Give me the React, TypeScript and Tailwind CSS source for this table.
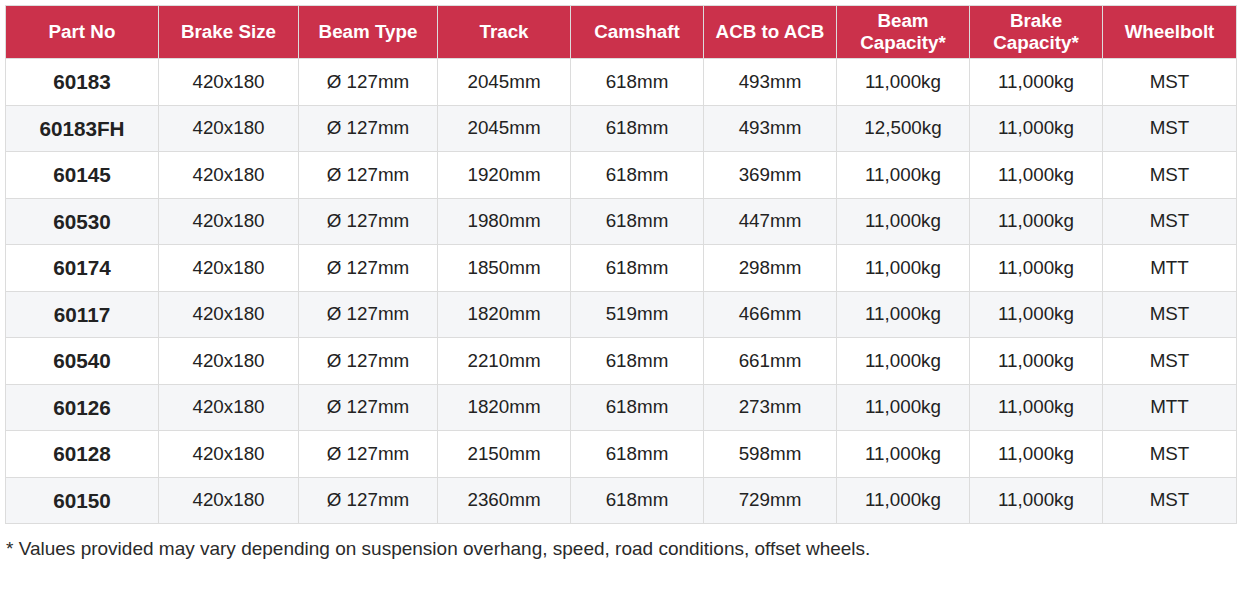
import React from "react";

const widths = ["w-[153px]", "w-[140px]", "w-[139px]", "w-[133px]", "w-[133px]", "w-[133px]", "w-[133px]", "w-[133px]", "w-[134px]"];

const headers: React.ReactNode[] = [
  "Part No",
  "Brake Size",
  "Beam Type",
  "Track",
  "Camshaft",
  "ACB to ACB",
  <>Beam<br />Capacity*</>,
  <>Brake<br />Capacity*</>,
  "Wheelbolt",
];

const rows: string[][] = [
  ["60183", "420x180", "Ø 127mm", "2045mm", "618mm", "493mm", "11,000kg", "11,000kg", "MST"],
  ["60183FH", "420x180", "Ø 127mm", "2045mm", "618mm", "493mm", "12,500kg", "11,000kg", "MST"],
  ["60145", "420x180", "Ø 127mm", "1920mm", "618mm", "369mm", "11,000kg", "11,000kg", "MST"],
  ["60530", "420x180", "Ø 127mm", "1980mm", "618mm", "447mm", "11,000kg", "11,000kg", "MST"],
  ["60174", "420x180", "Ø 127mm", "1850mm", "618mm", "298mm", "11,000kg", "11,000kg", "MTT"],
  ["60117", "420x180", "Ø 127mm", "1820mm", "519mm", "466mm", "11,000kg", "11,000kg", "MST"],
  ["60540", "420x180", "Ø 127mm", "2210mm", "618mm", "661mm", "11,000kg", "11,000kg", "MST"],
  ["60126", "420x180", "Ø 127mm", "1820mm", "618mm", "273mm", "11,000kg", "11,000kg", "MTT"],
  ["60128", "420x180", "Ø 127mm", "2150mm", "618mm", "598mm", "11,000kg", "11,000kg", "MST"],
  ["60150", "420x180", "Ø 127mm", "2360mm", "618mm", "729mm", "11,000kg", "11,000kg", "MST"],
];

export default function App() {
  return (
    <div className="w-[1244px] h-[612px] bg-white p-[5px] font-['Liberation_Sans',Arial,sans-serif]">
      <div className="flex flex-col border-t border-l border-[#dcdcdc] w-max">
        <div className="flex h-[53px] bg-[#cb314b] border-b border-[#dcdcdc]">
          {headers.map((h, i) => (
            <div
              key={i}
              className={`${widths[i]} flex items-center justify-center text-center border-r border-[#dcdcdc] text-white font-bold text-[18.8px] leading-[22px]`}
            >
              <span>{h}</span>
            </div>
          ))}
        </div>
        {rows.map((r, ri) => (
          <div
            key={ri}
            className={`flex h-[46.5px] border-b border-[#dcdcdc] ${ri % 2 === 1 ? "bg-[#f5f6f8]" : "bg-white"}`}
          >
            {r.map((c, ci) => (
              <div
                key={ci}
                className={`${widths[ci]} flex items-center justify-center border-r border-[#dcdcdc] text-[#222] ${ci === 0 ? "font-bold text-[20.7px]" : "text-[18.8px]"}`}
              >
                {c}
              </div>
            ))}
          </div>
        ))}
      </div>
      <p className="mt-[14px] ml-[1px] text-[19px] text-[#2a2a2a] leading-[22px]">
        * Values provided may vary depending on suspension overhang, speed, road conditions, offset wheels.
      </p>
    </div>
  );
}
